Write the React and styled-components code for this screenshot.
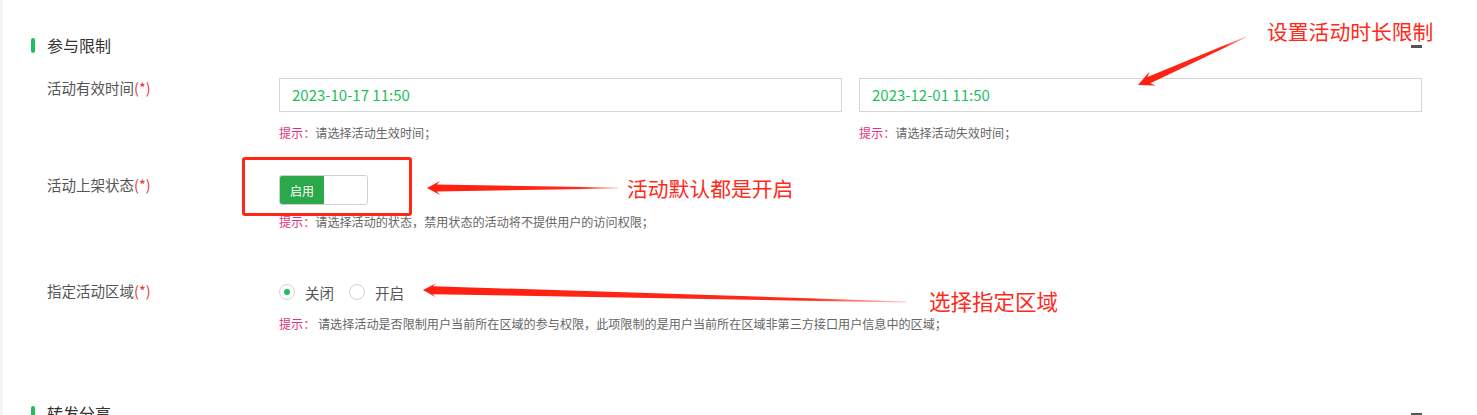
import React from 'react'
import styled, { createGlobalStyle } from 'styled-components'

const GlobalStyle = createGlobalStyle`
  html, body {
    margin: 0;
    padding: 0;
    background: #fff;
  }
  body {
    font-family: "Noto Sans CJK SC", "Noto Sans", sans-serif;
    overflow: hidden;
  }
`

// tapered arrow: thin tail, growing shaft, pointed head
const arrowPoints = (tail, tip, headLen, headW, neckW) => {
  const dx = tip[0] - tail[0]
  const dy = tip[1] - tail[1]
  const len = Math.hypot(dx, dy)
  const ux = dx / len
  const uy = dy / len
  const nx = -uy
  const ny = ux
  const at = (back, side) => [tip[0] - ux * back + nx * side, tip[1] - uy * back + ny * side]
  const pts = [
    tip,
    at(headLen, headW / 2),
    at(headLen * 0.75, neckW / 2),
    [tail[0] + nx * 0.6, tail[1] + ny * 0.6],
    [tail[0] - nx * 0.6, tail[1] - ny * 0.6],
    at(headLen * 0.75, -neckW / 2),
    at(headLen, -headW / 2),
  ]
  return pts.map((p) => p.map((v) => v.toFixed(1)).join(',')).join(' ')
}

const arrows = [
  { id: 'a1', tail: [1246, 37], tip: [1138, 85], head: 16, headW: 15, neck: 7 },
  { id: 'a2', tail: [618, 188], tip: [427, 188], head: 13, headW: 14, neck: 7 },
  { id: 'a3', tail: [906, 302], tip: [423, 290], head: 13, headW: 14, neck: 8 },
]

const App = () => {
  return (
    <>
      <GlobalStyle />
      <Page>
        <Section>
          <SectionHeader>
            <SectionBar />
            <SectionTitle>参与限制</SectionTitle>
            <Collapse />
          </SectionHeader>

          <FormRow $top={21}>
            <Label>活动有效时间<Required>(*)</Required></Label>
            <Field>
              <DateGrid>
                <div>
                  <DateInput>2023-10-17 11:50</DateInput>
                  <Hint $gap={13}><HintTag>提示：</HintTag>请选择活动生效时间；</Hint>
                </div>
                <div>
                  <DateInput>2023-12-01 11:50</DateInput>
                  <Hint $gap={13}><HintTag>提示：</HintTag>请选择活动失效时间；</Hint>
                </div>
              </DateGrid>
            </Field>
          </FormRow>

          <FormRow $top={34}>
            <Label>活动上架状态<Required>(*)</Required></Label>
            <Field>
              <Switch>
                <SwitchOn>启用</SwitchOn>
                <SwitchOff />
              </Switch>
              <Hint $gap={9}><HintTag>提示：</HintTag>请选择活动的状态，禁用状态的活动将不提供用户的访问权限；</Hint>
            </Field>
          </FormRow>

          <FormRow $top={51}>
            <Label>指定活动区域<Required>(*)</Required></Label>
            <Field>
              <RadioGroup>
                <RadioOption>
                  <RadioDot $checked />
                  关闭
                </RadioOption>
                <RadioOption>
                  <RadioDot />
                  开启
                </RadioOption>
              </RadioGroup>
              <Hint $gap={13}><HintTag>提示：</HintTag> 请选择活动是否限制用户当前所在区域的参与权限，此项限制的是用户当前所在区域非第三方接口用户信息中的区域；</Hint>
            </Field>
          </FormRow>
        </Section>

        <Section $top={69}>
          <SectionHeader>
            <SectionBar />
            <SectionTitle>转发分享</SectionTitle>
            <Collapse />
          </SectionHeader>
        </Section>

        <HighlightBox />
        <Note $x={1267} $y={17}>设置活动时长限制</Note>
        <Note $x={627} $y={174}>活动默认都是开启</Note>
        <Note $x={929} $y={287} $size={21.5}>选择指定区域</Note>

        <ArrowLayer viewBox="0 0 1477 415" width="1477" height="415">
          <defs>
            {arrows.map((a) => (
              <linearGradient
                key={a.id}
                id={a.id}
                gradientUnits="userSpaceOnUse"
                x1={a.tip[0]}
                y1={a.tip[1]}
                x2={a.tail[0]}
                y2={a.tail[1]}
              >
                <stop offset="0" stopColor="#ff1f10" />
                <stop offset="0.8" stopColor="#ff2a1a" />
                <stop offset="1" stopColor="#ff6a5a" stopOpacity="0.4" />
              </linearGradient>
            ))}
          </defs>
          {arrows.map((a) => (
            <polygon
              key={a.id}
              points={arrowPoints(a.tail, a.tip, a.head, a.headW, a.neck)}
              fill={`url(#${a.id})`}
            />
          ))}
        </ArrowLayer>
      </Page>
    </>
  )
}

export default App

const Page = styled.div`
position: relative;
width: 1477px;
height: 415px;
box-sizing: border-box;
border-left: 3px solid #f2f5f5;
padding: 33px 55px 0 28px;
overflow: hidden;
`

const Section = styled.section`
margin-top: ${(p) => p.$top || 0}px;
`

const SectionHeader = styled.div`
display: flex;
align-items: center;
height: 24px;
`

const SectionBar = styled.span`
width: 4px;
height: 15px;
border-radius: 2px;
background: #1cbf5c;
margin-right: 12px;
`

const SectionTitle = styled.h3`
margin: 0;
font-size: 16px;
font-weight: 400;
color: #333;
line-height: 24px;
`

const Collapse = styled.span`
margin-left: auto;
width: 11px;
height: 3px;
background: #555;
margin-top: 2px;
`

const FormRow = styled.div`
display: grid;
grid-template-columns: 232px 1fr;
margin-top: ${(p) => p.$top}px;
padding-left: 16px;
`

const Label = styled.div`
font-size: 14.5px;
line-height: 20px;
color: #555;
`

const Required = styled.span`
color: #e4393c;
`

const Field = styled.div`
display: flex;
flex-direction: column;
`

const DateGrid = styled.div`
display: grid;
grid-template-columns: 1fr 1fr;
column-gap: 17px;
`

const DateInput = styled.div`
height: 34px;
box-sizing: border-box;
border: 1px solid #d6d6d6;
padding: 0 12px 2px;
display: flex;
align-items: center;
font-size: 15px;
color: #1dbf5b;
font-family: "Noto Sans CJK SC", "Noto Sans", sans-serif;
`

const Hint = styled.div`
margin-top: ${(p) => p.$gap}px;
font-size: 12.1px;
line-height: 16px;
color: #666;
white-space: nowrap;
`

const HintTag = styled.span`
color: #e0327a;
`

const Switch = styled.div`
display: flex;
width: 89px;
height: 30px;
box-sizing: border-box;
border: 1px solid #cfcfcf;
border-radius: 3px;
overflow: hidden;
`

const SwitchOn = styled.span`
width: 44px;
display: flex;
align-items: center;
justify-content: center;
background: #2aa84a;
color: #fff;
font-size: 12px;
`

const SwitchOff = styled.span`
flex: 1;
background: #fff;
`

const RadioGroup = styled.div`
display: flex;
align-items: center;
height: 22px;
gap: 15px;
`

const RadioOption = styled.label`
display: flex;
align-items: center;
gap: 10px;
font-size: 14.5px;
color: #555;
`

const RadioDot = styled.span`
position: relative;
width: 16px;
height: 16px;
box-sizing: border-box;
border: 1px solid #d2d2d2;
border-radius: 50%;
background: #fff;

&::after {
  content: '';
  display: ${(p) => (p.$checked ? 'block' : 'none')};
  position: absolute;
  left: 50%;
  top: 50%;
  width: 6px;
  height: 6px;
  margin: -3px 0 0 -3px;
  border-radius: 50%;
  background: #1dbf5b;
}
`

const HighlightBox = styled.div`
position: absolute;
left: 239px;
top: 157px;
width: 170px;
height: 59px;
box-sizing: border-box;
border: 3px solid #ff2616;
border-radius: 3px;
pointer-events: none;
`

const Note = styled.div`
position: absolute;
left: ${(p) => p.$x - 3}px;
top: ${(p) => p.$y}px;
font-size: ${(p) => p.$size || 20.8}px;
line-height: 28px;
color: #ff2a1a;
white-space: nowrap;
`

const ArrowLayer = styled.svg`
position: absolute;
left: -3px;
top: 0;
pointer-events: none;
`
